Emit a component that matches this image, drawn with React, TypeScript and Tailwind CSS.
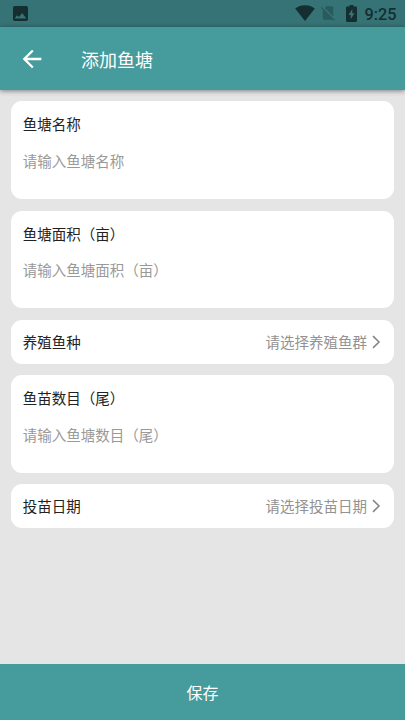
type Field = { label: string; placeholder: string; kind: "input" | "select" };

const fields: Field[] = [
  { label: "鱼塘名称", placeholder: "请输入鱼塘名称", kind: "input" },
  { label: "鱼塘面积（亩）", placeholder: "请输入鱼塘面积（亩）", kind: "input" },
  { label: "养殖鱼种", placeholder: "请选择养殖鱼群", kind: "select" },
  { label: "鱼苗数目（尾）", placeholder: "请输入鱼塘数目（尾）", kind: "input" },
  { label: "投苗日期", placeholder: "请选择投苗日期", kind: "select" },
];

function StatusBar() {
  return (
    <div className="h-[27px] shrink-0 bg-[#367376] flex items-center justify-between pl-[13px] pr-[9px] text-[#152e2f]">
      <svg width="15" height="15" viewBox="3 3 18 18" fill="currentColor">
        <path d="M21 19V5c0-1.100-.9-2-2-2H5c-1.100 0-2 .9-2 2v14c0 1.100.9 2 2 2h14c1.100 0 2-.9 2-2zM5 18l2.700-4 2.500 2.200L14 11.500 19 18z" fillRule="evenodd" />
      </svg>
      <div className="flex items-center">
        <svg className="mb-px" width="20" height="16" viewBox="0 0 20 16" fill="currentColor">
          <path d="M10 16L.2 3.600C2.800 1.400 6.200.2 10 .2s7.200 1.200 9.800 3.400z" />
        </svg>
        {/* no sim */}
        <svg className="ml-[4.500px] mb-px" width="18" height="18" viewBox="0 0 24 24" fill="#285b5d">
          <path d="M18.990 5c0-1.100-.89-2-1.990-2h-7L7.660 5.340 19 16.680 18.990 5zM3.650 3.880L2.380 5.150 5 7.770V19c0 1.100.9 2 2 2h10.010c.35 0 .67-.1.960-.26l1.880 1.880 1.270-1.270L3.650 3.880z" />
        </svg>
        <svg className="ml-[8.500px] mb-px" width="11" height="17" viewBox="0 0 11 17" fill="currentColor">
          <path fillRule="evenodd" d="M3.500 0h4v1.500h2.300c.7 0 1.200.5 1.200 1.200v13.100c0 .7-.5 1.200-1.200 1.200H1.200C.5 17 0 16.500 0 15.800V2.700c0-.7.500-1.200 1.200-1.200h2.300zM6.300 4L2.500 10h2.200v4.300L8.500 8.200H6.300z" />
        </svg>
        <span className="ml-[8px] w-[31.500px] mt-[2px] text-[16.300px] leading-[20px] font-medium font-['Roboto',sans-serif]">9:25</span>
      </div>
    </div>
  );
}

function InputCard({ label, placeholder }: Field) {
  return (
    <label className="block h-[97.900px] shrink-0 bg-white rounded-[11px] px-[11.800px] pt-[12px]">
      <span className="block text-[14.500px] leading-[22px] text-[#222]">{label}</span>
      <input
        placeholder={placeholder}
        className="block w-full mt-[13.200px] h-[24px] text-[14.500px] outline-none placeholder:text-[#999]"
      />
    </label>
  );
}

function SelectCard({ label, placeholder }: Field) {
  return (
    <button className="flex h-[43.800px] shrink-0 w-full items-center bg-white rounded-[11px] pl-[11.800px] pr-[13.500px] text-[14.500px]">
      <span className="text-[#222]">{label}</span>
      <span className="ml-auto text-[#929292]">{placeholder}</span>
      <svg className="ml-[4.500px]" width="9" height="14" viewBox="0 0 9 14" fill="none" stroke="#888" strokeWidth="1.600">
        <path d="M1 1.200L7 7 1 12.800" />
      </svg>
    </button>
  );
}

export default function App() {
  return (
    <div className="h-screen flex flex-col bg-[#e5e5e5] font-['Noto_Sans_CJK_SC',sans-serif]">
      <StatusBar />
      <header className="h-[63px] shrink-0 bg-[#469b9d] flex items-center pl-[17.500px] text-white shadow-[0_1px_5px_rgba(0,0,0,0.45)]">
        <button aria-label="返回">
          <svg width="28" height="28" viewBox="0 0 24 24" fill="currentColor">
            <path d="M20 11H7.830l5.590-5.590L12 4l-8 8 8 8 1.410-1.410L7.830 13H20v-2z" />
          </svg>
        </button>
        <h1 className="ml-[35.500px] pt-[2px] text-[18px]">添加鱼塘</h1>
      </header>
      <main className="flex-1 flex flex-col gap-[11.400px] px-[11px] pt-[11.300px]">
        {fields.map(f => f.kind === "input" ? <InputCard key={f.label} {...f} /> : <SelectCard key={f.label} {...f} />)}
      </main>
      <button className="h-[56px] shrink-0 bg-[#469b9d] text-white text-[16px]">保存</button>
    </div>
  );
}
